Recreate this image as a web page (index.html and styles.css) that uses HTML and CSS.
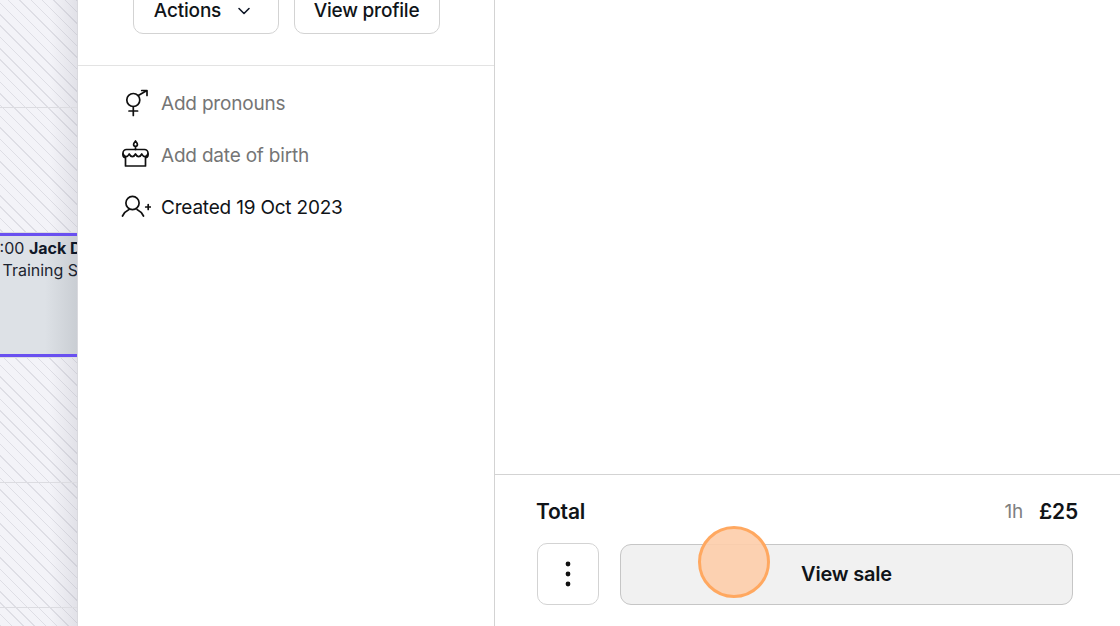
FILE: index.html
```html
<!DOCTYPE html>
<html lang="en">
<head>
    <meta charset="UTF-8">
    <meta name="viewport" content="width=device-width, initial-scale=1.0">
    <title>Appointment</title>
    <link rel="stylesheet" href="styles.css">
</head>
<body>
    <div class="app">
        <div class="calendar">
            <div class="hour hour-first"></div>
            <div class="hour"></div>
            <div class="hour"></div>
            <div class="hour"></div>
            <div class="hour"></div>
            <div class="event">
                <p class="event-title">10:00 <b>Jack Doe</b></p>
                <p class="event-service">1h Training Session</p>
            </div>
        </div>

        <div class="customer">
            <div class="customer-actions">
                <button class="btn btn-actions">Actions
                    <svg class="chevron" width="14" height="14" viewBox="0 0 14 14" fill="none" stroke="#101828" stroke-width="1.6" stroke-linecap="round" stroke-linejoin="round"><path d="M2 4.500 7 9.500 12 4.500"/></svg>
                </button>
                <button class="btn">View profile</button>
            </div>
            <ul class="info-list">
                <li class="info-row muted">
                    <svg class="info-icon" width="30" height="30" viewBox="0 0 30 30" fill="none" stroke="#101010" stroke-width="1.7" stroke-linecap="round" stroke-linejoin="round">
                        <circle cx="12.300" cy="12" r="6.500"/>
                        <path d="M12.300 18.500v9M8 23h8.600M17.300 7.500 25.500 2.800M20.700 2.500H26v5"/>
                    </svg>
                    Add pronouns
                </li>
                <li class="info-row muted">
                    <svg class="info-icon" width="30" height="30" viewBox="0 0 30 30" fill="none" stroke="#101010" stroke-width="1.7" stroke-linecap="round" stroke-linejoin="round">
                        <path d="M14.500 1c1.300 1.500 1.900 2.500 1.900 3.500a1.900 1.900 0 0 1-3.800 0c0-1 .6-2 1.900-3.500ZM14.500 6.500v3"/>
                        <path d="M5.500 9.500h18a3.500 3.500 0 0 1 3.500 3.500v2.500a2.200 2.200 0 0 1-2.500 2v8.500h-20v-8.500a2.200 2.200 0 0 1-2.500-2V13a3.500 3.500 0 0 1 3.500-3.500Z"/>
                        <path d="M2 14c2 3.500 4.500 3.500 6.200 0 1.800 3.500 4.500 3.500 6.300 0 1.800 3.500 4.500 3.500 6.300 0 1.700 3.500 4.200 3.500 6.200 0"/>
                    </svg>
                    Add date of birth
                </li>
                <li class="info-row">
                    <svg class="info-icon" width="30" height="30" viewBox="0 0 30 30" fill="none" stroke="#101010" stroke-width="1.7" stroke-linecap="round" stroke-linejoin="round">
                        <circle cx="11.500" cy="11" r="6.600"/>
                        <path d="M1.500 24c1.500-3 4-5.300 6.500-6.500M22.500 24c-1.500-3-4-5.300-6.500-6.500M24.700 15h5M27.200 12.500v5"/>
                    </svg>
                    Created 19 Oct 2023
                </li>
            </ul>
        </div>

        <div class="sale">
            <div class="sale-body"></div>
            <div class="sale-footer">
                <div class="total-row">
                    <span class="total-label">Total</span>
                    <span class="total-time">1h</span>
                    <span class="total-price">£25</span>
                </div>
                <div class="button-row">
                    <button class="btn-more" aria-label="More">
                        <svg width="6" height="26" viewBox="0 0 6 26" fill="#101010"><circle cx="3" cy="3" r="2.400"/><circle cx="3" cy="13" r="2.400"/><circle cx="3" cy="23" r="2.400"/></svg>
                    </button>
                    <button class="btn-sale">View sale</button>
                </div>
            </div>
            <div class="click-marker"></div>
        </div>
    </div>
</body>
</html>
```

FILE: styles.css
```css
* {
  box-sizing: border-box;
  margin: 0;
  padding: 0;
}

body {
  font-family: Inter, "Liberation Sans", sans-serif;
  color: #101418;
  background-color: #fff;
  overflow: hidden;
}

.app {
  display: flex;
  width: 1120px;
  height: 626px;
  overflow: hidden;
}

/* calendar strip on the left */
.calendar {
  position: relative;
  width: 78px;
  flex-shrink: 0;
  overflow: hidden;
  border-right: 1px solid #d9d9de;
  background-color: #f2f2f7;
  background-image:
    linear-gradient(90deg, rgba(120, 120, 135, 0) 50px, rgba(120, 120, 135, 0.14) 77px),
    repeating-linear-gradient(45deg, #dedee5 0, #dedee5 1px, #f3f3f8 1px, #f3f3f8 8px);
}

.hour {
  height: 125px;
  border-bottom: 1px solid #dcdce1;
}

.hour-first {
  height: 108px;
}

.event {
  position: absolute;
  top: 233px;
  left: -17px;
  width: 94px;
  height: 124px;
  padding-top: 1px;
  border-top: 3px solid #6950f0;
  border-bottom: 3px solid #6950f0;
  background-color: #dde1e6;
  background-image: linear-gradient(90deg, rgba(90, 95, 105, 0) 62px, rgba(90, 95, 105, 0.15) 94px);
  font-size: 16px;
  line-height: 22px;
  white-space: nowrap;
  overflow: hidden;
  color: #1c2430;
}

.event-title b {
  font-weight: 700;
  color: #101828;
}

.event-service {
  margin-left: -1px;
}

/* customer panel */
.customer {
  width: 417px;
  flex-shrink: 0;
  border-right: 1px solid #d3d3d3;
}

.customer-actions {
  display: flex;
  justify-content: center;
  gap: 15px;
  height: 81px;
  margin-top: -15px;
  padding-bottom: 32px;
  border-bottom: 1px solid #e3e3e3;
}

.btn {
  display: flex;
  align-items: center;
  justify-content: center;
  gap: 16px;
  width: 146px;
  height: 49px;
  padding-top: 2px;
  border: 1px solid #d3d3d3;
  border-radius: 10px;
  background-color: #fff;
  font-family: inherit;
  font-size: 19px;
  font-weight: 550;
  color: #101418;
  letter-spacing: -0.2px;
}

.btn-actions {
  padding-right: 6px;
}

.info-list {
  list-style: none;
  padding: 11px 0 0 43px;
}

.info-row {
  display: flex;
  align-items: center;
  gap: 10px;
  height: 52px;
  font-size: 19px;
  letter-spacing: -0.2px;
}

.muted {
  color: #757575;
}

.info-icon {
  flex-shrink: 0;
}

/* sale panel */
.sale {
  position: relative;
  flex: 1;
  display: flex;
  flex-direction: column;
}

.sale-body {
  flex: 1;
}

.sale-footer {
  height: 152px;
  padding: 0 42px;
  border-top: 1px solid #d3d3d3;
}

.total-row {
  display: flex;
  align-items: center;
  height: 68px;
  padding-top: 4px;
  font-size: 21px;
  font-weight: 600;
  letter-spacing: -0.2px;
}

.total-label {
  flex: 1;
  margin-left: -1px;
}

.total-time {
  margin-right: 16px;
  font-size: 19px;
  font-weight: 400;
  color: #808080;
}

.button-row {
  display: flex;
  gap: 21px;
  margin-right: 5px;
}

.btn-more {
  display: flex;
  align-items: center;
  justify-content: center;
  width: 62px;
  height: 62px;
  border: 1px solid #d3d3d3;
  border-radius: 10px;
  background-color: #fff;
}

.btn-sale {
  flex: 1;
  height: 61px;
  margin-top: 1px;
  padding-bottom: 2px;
  border: 1.5px solid #c6c6c6;
  border-radius: 11px;
  background-color: #f1f1f1;
  font-family: inherit;
  font-size: 20px;
  font-weight: 600;
  color: #101418;
  letter-spacing: -0.2px;
}

/* recording tool's click highlight */
.click-marker {
  position: absolute;
  left: 203px;
  top: 526px;
  width: 72px;
  height: 72px;
  border: 3px solid #ffa860;
  border-radius: 50%;
  background-color: rgba(253, 205, 170, 0.9);
}
```
